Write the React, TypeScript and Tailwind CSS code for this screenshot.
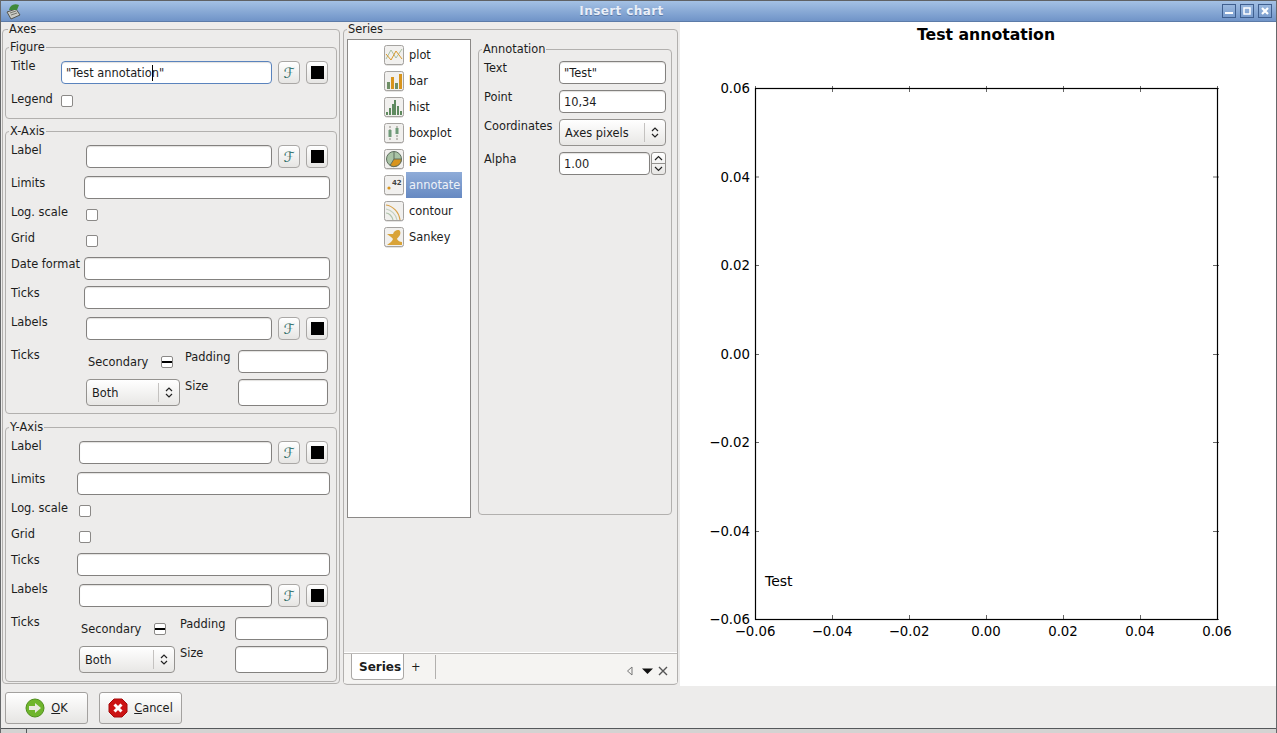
import React from 'react';

const ticksX = [
  { x: 755, t: '−0.06' },
  { x: 832, t: '−0.04' },
  { x: 909, t: '−0.02' },
  { x: 986, t: '0.00' },
  { x: 1063, t: '0.02' },
  { x: 1140, t: '0.04' },
  { x: 1217, t: '0.06' },
];
const ticksY = [
  { y: 88, t: '0.06' },
  { y: 176.5, t: '0.04' },
  { y: 265, t: '0.02' },
  { y: 354, t: '0.00' },
  { y: 442, t: '−0.02' },
  { y: 531, t: '−0.04' },
  { y: 619, t: '−0.06' },
];

function TextBox({ className = '', children, focused = false }: { className?: string; children?: React.ReactNode; focused?: boolean }) {
  return (
    <div
      className={`flex h-[23px] shrink-0 items-center rounded-[4px] border bg-white px-[4px] shadow-[inset_0_1px_1px_#e2e0de] ${
        focused ? 'border-[#5a83bd]' : 'border-[#83817f]'
      } ${className}`}
    >
      {children}
    </div>
  );
}

function FontButton() {
  return (
    <div className="flex h-[23px] w-[22px] shrink-0 items-center justify-center rounded-[4px] border border-[#a9a7a5] bg-gradient-to-b from-white to-[#e6e5e3] font-['DejaVu_Sans',sans-serif] text-[14px] text-[#2a6b66]">
      ℱ
    </div>
  );
}

function ColorButton() {
  return (
    <div className="flex h-[23px] w-[22px] shrink-0 items-center justify-center rounded-[4px] border border-[#a9a7a5] bg-gradient-to-b from-white to-[#e6e5e3]">
      <div className="h-[13px] w-[13px] bg-black" />
    </div>
  );
}

function Check({ mixed = false }: { mixed?: boolean }) {
  return (
    <div className="flex h-[12px] w-[12px] shrink-0 items-center rounded-[2px] border border-[#8b8987] bg-white">
      {mixed && <div className="h-[2px] w-full bg-black" />}
    </div>
  );
}

function Chevrons() {
  return (
    <svg width="8" height="13" viewBox="0 0 8 13" fill="none" stroke="#222" strokeWidth="1.2">
      <path d="M1 5 L4 2 L7 5" />
      <path d="M1 8 L4 11 L7 8" />
    </svg>
  );
}

function Select({ className = '', value }: { className?: string; value: string }) {
  return (
    <div
      className={`flex h-[27px] shrink-0 items-center rounded-[4px] border border-[#94928f] bg-gradient-to-b from-white to-[#e8e7e5] pl-[5px] ${className}`}
    >
      <span className="flex-1">{value}</span>
      <div className="h-[19px] w-px bg-[#c4c2c0]" />
      <div className="flex w-[20px] justify-center">
        <Chevrons />
      </div>
    </div>
  );
}

function Group({ title, className = '', children }: { title: string; className?: string; children: React.ReactNode }) {
  return (
    <fieldset className={`rounded-[4px] border border-[#b2b0ae] ${className}`}>
      <legend className="ml-[3px] px-px leading-[14px]">{title}</legend>
      {children}
    </fieldset>
  );
}

// labels sit a little above the middle of their field, as Qt's form layout draws them
function Row({ label, labelW, dy = 0, className = '', children }: { label: string; labelW: number; dy?: number; className?: string; children: React.ReactNode }) {
  return (
    <div className={`flex items-start pl-[5px] ${className}`}>
      <div className="shrink-0 leading-[14px]" style={{ width: labelW, marginTop: dy }}>
        {label}
      </div>
      {children}
    </div>
  );
}

function AxisGroup({ title, x }: { title: string; x: 'x' | 'y' }) {
  const isX = x === 'x';
  const labelW = isX ? 75 : 68;
  const fieldW = isX ? 73 : 66;
  return (
    <Group title={title} className={isX ? 'mt-[5px] h-[290px]' : 'mt-[6px] h-[262px]'}>
      <Row label="Label" labelW={labelW} dy={-2} className="mt-[7px]">
        <TextBox className={isX ? 'w-[186px]' : 'w-[193px]'} />
        <div className="ml-[6px] flex gap-[6px]">
          <FontButton />
          <ColorButton />
        </div>
      </Row>
      <Row label="Limits" labelW={fieldW} className="mt-[8px]">
        <TextBox className={isX ? 'w-[246px]' : 'w-[253px]'} />
      </Row>
      <Row label="Log. scale" labelW={isX ? 75 : 68} className="mt-[6px] h-[20px]">
        <div className="pt-[4px]">
          <Check />
        </div>
      </Row>
      <Row label="Grid" labelW={isX ? 75 : 68} className="mt-[6px] h-[20px]">
        <div className="pt-[4px]">
          <Check />
        </div>
      </Row>
      {isX && (
        <Row label="Date format" labelW={fieldW} className="mt-[6px]">
          <TextBox className="w-[246px]" />
        </Row>
      )}
      <Row label="Ticks" labelW={fieldW} className="mt-[6px]">
        <TextBox className={isX ? 'w-[246px]' : 'w-[253px]'} />
      </Row>
      <Row label="Labels" labelW={labelW} dy={-2} className="mt-[8px]">
        <TextBox className={isX ? 'w-[186px]' : 'w-[193px]'} />
        <div className="ml-[6px] flex gap-[6px]">
          <FontButton />
          <ColorButton />
        </div>
      </Row>
      <Row label="Ticks" labelW={labelW} dy={-2} className="mt-[10px]">
        <div className="flex flex-col">
          <div className="flex h-[23px] items-center">
            <span className="ml-[2px] w-[73px] pt-[1px]">Secondary</span>
            <Check mixed />
            <span className={`${isX ? 'ml-[12px] w-[53px]' : 'ml-[14px] w-[55px]'} self-start leading-[14px]`}>Padding</span>
            <TextBox className={isX ? 'w-[90px]' : 'w-[93px]'} />
          </div>
          <div className="mt-[6px] flex items-start">
            <Select value="Both" className={isX ? 'w-[94px]' : 'w-[96px]'} />
            <span className="ml-[5px] w-[53px] leading-[14px]">Size</span>
            <TextBox className={`!h-[27px] ${isX ? 'w-[90px]' : 'ml-[2px] w-[93px]'}`} />
          </div>
        </div>
      </Row>
    </Group>
  );
}

function IconFrame({ children }: { children: React.ReactNode }) {
  return (
    <svg width="20" height="21" viewBox="0 0 20 21" className="shrink-0">
      <rect x="0.5" y="1.5" width="19" height="19" rx="2" fill="#c9c7c4" />
      <rect x="0.5" y="0.5" width="19" height="19" rx="2" fill="#f1f0ee" stroke="#a5a3a0" />
      {children}
    </svg>
  );
}

const seriesIcons: Record<string, React.ReactNode> = {
  plot: (
    <>
      <path d="M2 14 L7 5 L12 13 L18 4" fill="none" stroke="#a8bfa0" />
      <path d="M2 9 L7 15 L12 6 L18 14" fill="none" stroke="#d89a2b" />
    </>
  ),
  bar: (
    <>
      <rect x="3" y="11" width="3" height="7" fill="#6f8f66" />
      <rect x="7" y="6" width="3" height="12" fill="#d8941c" />
      <rect x="11" y="12" width="3" height="6" fill="#6f8f66" />
      <rect x="15" y="3" width="3" height="15" fill="#d8941c" />
    </>
  ),
  hist: (
    <>
      <rect x="2" y="15" width="2" height="3" fill="#5f8a5f" />
      <rect x="5" y="11" width="2" height="7" fill="#5f8a5f" />
      <rect x="8" y="7" width="2" height="11" fill="#5f8a5f" />
      <rect x="10" y="3" width="2" height="15" fill="#5f8a5f" />
      <rect x="13" y="9" width="2" height="9" fill="#5f8a5f" />
      <rect x="16" y="14" width="2" height="4" fill="#5f8a5f" />
    </>
  ),
  boxplot: (
    <>
      <path d="M6 3 V17 M13 3 V17" stroke="#8a8a80" strokeDasharray="2 1" />
      <rect x="4.5" y="7" width="3" height="7" fill="#6f9a78" />
      <rect x="11.5" y="5" width="3" height="6" fill="#6f9a78" />
    </>
  ),
  pie: (
    <>
      <circle cx="10" cy="10" r="7.5" fill="#a9c3a5" stroke="#5f6f5f" />
      <path d="M10 10 L17.5 10 A7.5 7.5 0 0 1 6 16.5 Z" fill="#d8941c" stroke="#5f6f5f" />
      <path d="M10 10 V2.5" stroke="#5f6f5f" />
    </>
  ),
  annotate: (
    <>
      <circle cx="5" cy="13" r="1.6" fill="#d8941c" />
      <text x="8" y="9.5" fontSize="7" fontWeight="bold" fill="#444">42</text>
    </>
  ),
  contour: (
    <>
      <path d="M2 4 C9 5 15 11 16 19" fill="none" stroke="#d8a24a" strokeWidth="1.2" />
      <path d="M2 8 C7 9 12 13 13 19" fill="none" stroke="#c4d0be" strokeWidth="1.2" />
      <path d="M2 12 C5 12 8 15 9 19" fill="none" stroke="#b0c4ac" strokeWidth="1.2" />
    </>
  ),
  Sankey: (
    <path d="M3 7 H9 C10 4 12 3 14 3 C16 3 17 5 16 8 C15 10 13 11 13 12 C14 14 16 15 18 15 V18 H3 C5 16 8 15 9 12 C8 10 5 9 3 7 Z" fill="#d9a338" />
  ),
};

const seriesNames = ['plot', 'bar', 'hist', 'boxplot', 'pie', 'annotate', 'contour', 'Sankey'];

function SeriesItem({ name }: { name: string }) {
  const selected = name === 'annotate';
  return (
    <div className="flex h-[26px] items-center pl-[36px]">
      <IconFrame>{seriesIcons[name]}</IconFrame>
      <div
        className={`ml-[2px] flex h-[26px] w-[56px] items-center pl-[3px] ${
          selected ? 'bg-gradient-to-b from-[#8facd8] to-[#6689c2] text-[#eef2f8]' : ''
        }`}
      >
        {name}
      </div>
    </div>
  );
}

function Annotation() {
  return (
    <Group title="Annotation" className="ml-[7px] mt-[3px] h-[473px] w-[194px]">
      <Row label="Text" labelW={75} className="mt-[5px]">
        <TextBox className="w-[107px]">{'"Test"'}</TextBox>
      </Row>
      <Row label="Point" labelW={75} className="mt-[6px]">
        <TextBox className="w-[107px]">10,34</TextBox>
      </Row>
      <Row label="Coordinates" labelW={75} className="mt-[6px]">
        <Select value="Axes pixels" className="w-[107px]" />
      </Row>
      <Row label="Alpha" labelW={75} className="mt-[6px]">
        <TextBox className="w-[91px]">1.00</TextBox>
        <div className="ml-px flex h-[23px] w-[15px] flex-col rounded-[3px] border border-[#94928f] bg-gradient-to-b from-white to-[#e8e7e5]">
          <svg viewBox="0 0 13 10" className="h-[10px] w-[13px]" fill="none" stroke="#222" strokeWidth="1.2">
            <path d="M3 7 L6.5 3.5 L10 7" />
          </svg>
          <div className="h-px bg-[#94928f]" />
          <svg viewBox="0 0 13 10" className="h-[10px] w-[13px]" fill="none" stroke="#222" strokeWidth="1.2">
            <path d="M3 3 L6.5 6.5 L10 3" />
          </svg>
        </div>
      </Row>
    </Group>
  );
}

function TabBar() {
  return (
    <div className="mt-auto flex h-[30px] items-end border-t border-t-[#bdbbb9] bg-[#f5f4f2] shadow-[0_-1px_0_#ffffff]">
      <div className="mb-[3px] ml-[7px] flex h-[26px] w-[53px] items-center rounded-b-[4px] border-x border-b border-[#aaa8a6] bg-white pl-[7px] text-[12px] font-bold">
        Series
      </div>
      <div className="mb-[3px] flex h-[26px] w-[31px] items-center pl-[7px]">+</div>
      <div className="mb-[4px] h-[24px] w-px bg-[#b2b0ae]" />
      <div className="mb-[7px] ml-auto mr-[9px] flex items-center">
        <svg width="8" height="10" viewBox="0 0 8 10" fill="none" stroke="#777">
          <path d="M6 1 L1.5 5 L6 9 Z" />
        </svg>
        <svg width="11" height="10" viewBox="0 0 11 10" className="ml-[8px]">
          <path d="M0 2.5 H11 L5.5 8 Z" fill="#111" />
        </svg>
        <svg width="10" height="10" viewBox="0 0 10 10" stroke="#555" strokeWidth="1.4" className="ml-[5px]">
          <path d="M1 1 L9 9 M9 1 L1 9" />
        </svg>
      </div>
    </div>
  );
}

function Plot() {
  return (
    <svg viewBox="680 22 597 664" className="h-[664px] w-[597px] bg-white" fontFamily="'DejaVu Sans', sans-serif">
      <text x="986" y="40" textAnchor="middle" fontSize="15.7" fontWeight="bold" fill="#000">
        Test annotation
      </text>
      <rect x="755.5" y="88.5" width="462" height="531" fill="none" stroke="#000" strokeWidth="1.2" />
      {ticksX.map((k) => (
        <g key={k.x}>
          <path d={`M${k.x + 0.5} 86 v6 M${k.x + 0.5} 619 v-4`} stroke="#000" strokeWidth="0.6" />
          <text x={k.x} y="636" textAnchor="middle" fontSize="13.3" fill="#000">
            {k.t}
          </text>
        </g>
      ))}
      {ticksY.map((k) => (
        <g key={k.y}>
          <path d={`M755 ${k.y + 0.5} h4 M1219 ${k.y + 0.5} h-6`} stroke="#000" strokeWidth="0.6" />
          <text x="750" y={k.y + 5} textAnchor="end" fontSize="13.3" fill="#000">
            {k.t}
          </text>
        </g>
      ))}
      <text x="765" y="586" fontSize="14" fill="#000">
        Test
      </text>
    </svg>
  );
}

function WinButton({ children }: { children: React.ReactNode }) {
  return (
    <svg width="14" height="14" viewBox="0 0 14 14">
      <rect x="0.5" y="0.5" width="13" height="13" fill="none" stroke="#3f5f8f" />
      {children}
    </svg>
  );
}

function TitleBar() {
  return (
    <div className="flex h-[22px] shrink-0 items-center border-y border-b-[#5c7ba8] border-t-[#5f6164] bg-gradient-to-b from-[#a4c1e4] to-[#7094c8] pl-[5px] pr-[4px]">
      <svg width="15" height="17" viewBox="0 0 15 17" className="shrink-0">
        <path d="M1 9 L10 6 L14 12 L5 16 Z" fill="#c9c9c4" stroke="#55554f" />
        <path d="M3 7 C4 2 8 0 13 2 L11 7 Z" fill="#3f8a3a" />
        <path d="M4 10 L10 8 M5 12 L11 10" stroke="#77776f" />
      </svg>
      <div className="flex-1 text-center text-[12px] font-bold tracking-[0.4px] text-[#e9eff8] [text-shadow:0_1px_0_#5c7ba8]">Insert chart</div>
      <div className="flex gap-[4px]">
        <WinButton>
          <rect x="3" y="8" width="8" height="2" fill="#fff" />
        </WinButton>
        <WinButton>
          <rect x="4" y="4" width="6" height="6" fill="none" stroke="#fff" strokeWidth="1.5" />
        </WinButton>
        <WinButton>
          <path d="M4 4 L10 10 M10 4 L4 10" stroke="#fff" strokeWidth="2.2" />
        </WinButton>
      </div>
    </div>
  );
}

function DialogButton({ label, accel, icon }: { label: string; accel: string; icon: React.ReactNode }) {
  return (
    <div className="flex h-[32px] w-[83px] items-center justify-center gap-[6px] rounded-[3px] border border-[#a3a19f] bg-gradient-to-b from-white to-[#e6e5e3]">
      {icon}
      <span>
        <span className="underline">{accel}</span>
        {label}
      </span>
    </div>
  );
}

export default function App() {
  return (
    <div className="flex h-[733px] w-[1277px] flex-col overflow-hidden border-x border-[#66686a] bg-[#edeceb] font-['DejaVu_Sans',sans-serif] text-[11.4px] leading-[14px] text-[#1c1c1c]">
      <TitleBar />
      <div className="flex h-[664px] shrink-0">
        <div className="w-[339px] shrink-0 pl-px">
          <Group title="Axes" className="h-[662px] px-[2px]">
            <Group title="Figure" className="mt-[4px] h-[79px]">
              <Row label="Title" labelW={50} dy={-2} className="mt-[7px]">
                <TextBox focused className="w-[211px]">
                  <span>"Test annotatio</span>
                  <span className="-mr-px h-[16px] w-px shrink-0 bg-black" />
                  <span>n"</span>
                </TextBox>
                <div className="ml-[6px] flex gap-[6px]">
                  <FontButton />
                  <ColorButton />
                </div>
              </Row>
              <Row label="Legend" labelW={50} className="mt-[8px]">
                <div className="pt-[3px]">
                  <Check />
                </div>
              </Row>
            </Group>
            <AxisGroup title="X-Axis" x="x" />
            <AxisGroup title="Y-Axis" x="y" />
          </Group>
        </div>
        <div className="ml-[3px] w-[336px] shrink-0">
          <Group title="Series" className="h-[663px] w-[335px]">
            <div className="flex h-[647px] flex-col pt-px">
              <div className="flex pl-[3px] pt-[2px]">
                <div className="h-[479px] w-[124px] shrink-0 border border-[#8b8987] bg-white pt-[2px]">
                  {seriesNames.map((n) => (
                    <SeriesItem key={n} name={n} />
                  ))}
                </div>
                <Annotation />
              </div>
              <TabBar />
            </div>
          </Group>
        </div>
        <div className="ml-px">
          <Plot />
        </div>
      </div>
      <div className="flex h-[42px] shrink-0 gap-[11px] pl-[4px] pt-[6px]">
        <DialogButton
          label="K"
          accel="O"
          icon={
            <svg width="20" height="20" viewBox="0 0 20 20">
              <circle cx="10" cy="10" r="9" fill="#6fb52c" stroke="#4f8f1c" />
              <path d="M4 8 H10 V5 L16 10 L10 15 V12 H4 Z" fill="#e8e8e0" />
            </svg>
          }
        />
        <DialogButton
          label="ancel"
          accel="C"
          icon={
            <svg width="20" height="20" viewBox="0 0 20 20">
              <path d="M6 1 H14 L19 6 V14 L14 19 H6 L1 14 V6 Z" fill="#cc1414" stroke="#a50c0c" />
              <path d="M6.5 6.5 L13.5 13.5 M13.5 6.5 L6.5 13.5" stroke="#fff" strokeWidth="3" />
            </svg>
          }
        />
      </div>
      <div className="flex-1 border-t border-t-[#55585b] bg-[#d4d3d2] pl-[25px]">
        <div className="h-full w-px bg-[#55585b]" />
      </div>
    </div>
  );
}
